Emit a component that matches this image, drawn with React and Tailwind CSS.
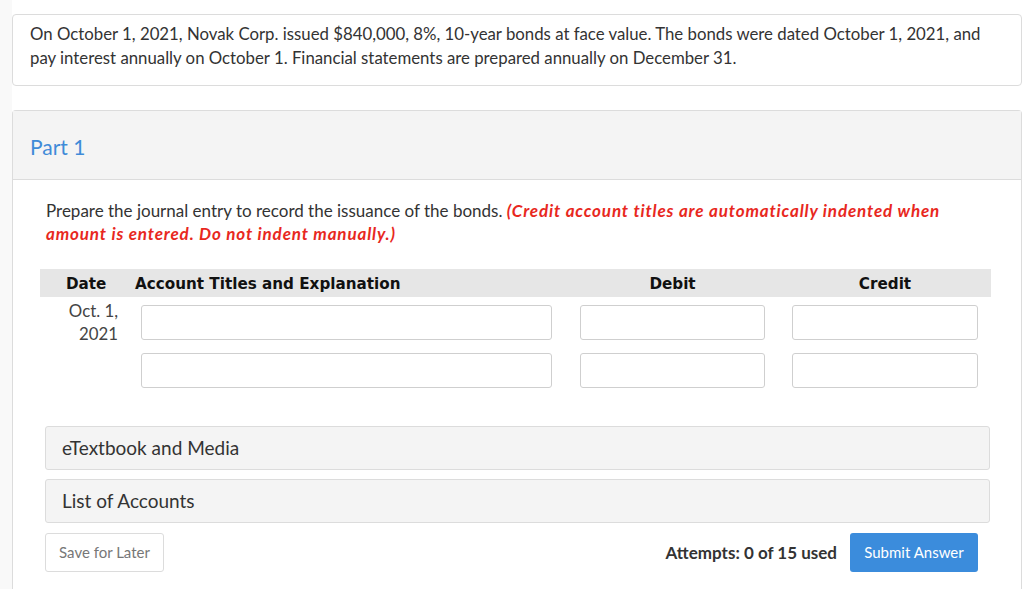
import React from 'react';

const inputCls = 'h-[35px] rounded-[3px] border border-[#cfcfcf] bg-white';

const JournalRow = ({ date }) => (
  <div className="flex items-start">
    <div className="-mt-[6px] w-[78px] shrink-0 text-right text-[16.8px] leading-[23px] text-[#444]">
      {date}
    </div>
    <div className={`ml-[23px] w-[411px] shrink-0 ${inputCls}`} />
    <div className={`ml-[28px] w-[185px] shrink-0 ${inputCls}`} />
    <div className={`ml-[27px] w-[186px] shrink-0 ${inputCls}`} />
  </div>
);

const Panel = ({ title }) => (
  <div className="flex h-[44px] items-center rounded-[3px] border border-[#dcdcdc] bg-[#f4f4f4] pl-[16px] text-[19px] text-[#333]">
    {title}
  </div>
);

const App = () => {
  return (
    <div className="flex min-h-[589px] bg-white font-['Lato','Open_Sans',sans-serif] text-[#333]">
      <div className="w-[12px] shrink-0 bg-[#f9f9f9]" />
      <div className="min-w-0 flex-1 pt-[14px] pr-[2px]">
        <div className="rounded-[4px] border border-[#dcdcdc] bg-white px-[17px] pt-[7px] pb-[15px] text-[16.8px] leading-[24px]">
          On October 1, 2021, Novak Corp. issued $840,000, 8%, 10-year bonds at face value. The bonds were dated October 1, 2021, and pay interest annually on October 1. Financial statements are prepared annually on December 31.
        </div>

        <div className="mt-[24px] rounded-t-[4px] border border-b-0 border-[#dcdcdc] bg-white">
          <div className="flex h-[69px] items-center border-b border-[#dcdcdc] bg-[#f4f4f4] pl-[17px] pt-[3px] text-[21px] text-[#3f8bd8]">
            Part 1
          </div>
          <div className="pl-[27px] pr-[30px] pt-[19px]">
            <p className="pl-[6px] text-[17px] leading-[23px] text-[#333]">
              Prepare the journal entry to record the issuance of the bonds.{' '}
              <span className="font-bold italic tracking-[0.85px] text-[#e8281e]">
                (Credit account titles are automatically indented when amount is entered. Do not indent manually.)
              </span>
            </p>

            <div className="mt-[24px] flex h-[28px] items-center pt-[2px] bg-[#e6e6e6] font-['DejaVu_Sans',sans-serif] text-[15.2px] font-bold text-[#111]">
              <div className="w-[95px] shrink-0 pl-[26px]">Date</div>
              <div className="w-[445px] shrink-0">Account Titles and Explanation</div>
              <div className="w-[185px] shrink-0 text-center">Debit</div>
              <div className="ml-[27px] w-[186px] shrink-0 text-center">Credit</div>
            </div>

            <div className="mt-[8px] flex flex-col gap-[8px]">
              <JournalRow date={<>Oct. 1,<br />2021</>} />
              <JournalRow date="" />
            </div>

            <div className="mt-[38px] ml-[5px] mr-[1px] flex flex-col gap-[9px]">
              <Panel title="eTextbook and Media" />
              <Panel title="List of Accounts" />
            </div>

            <div className="mt-[10px] flex items-center justify-between pl-[5px] pr-[13px]">
              <button className="h-[39px] w-[119px] rounded-[3px] border border-[#dcdcdc] bg-white text-[15px] text-[#777]">
                Save for Later
              </button>
              <div className="flex items-center gap-[13px]">
                <span className="text-[17px] font-bold text-[#333]">Attempts: 0 of 15 used</span>
                <button className="h-[39px] w-[128px] rounded-[3px] bg-[#3b8cdc] text-[15px] text-white">
                  Submit Answer
                </button>
              </div>
            </div>
            <div className="h-[30px]" />
          </div>
        </div>
      </div>
    </div>
  );
};

export default App;
